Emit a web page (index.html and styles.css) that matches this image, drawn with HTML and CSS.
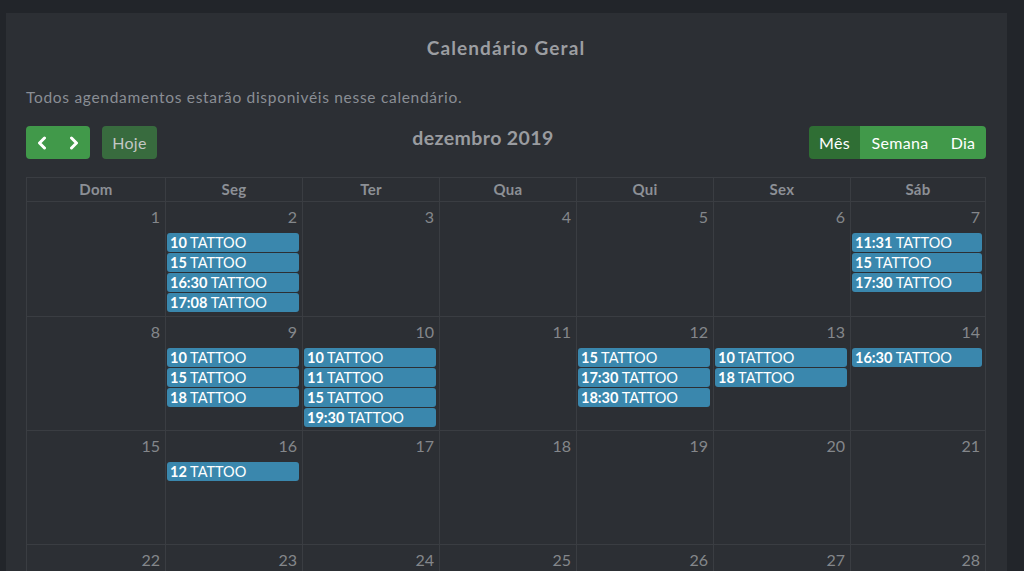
FILE: index.html
```html
<!DOCTYPE html>
<html lang="pt-BR">
<head>
<meta charset="utf-8">
<title>Calendário Geral</title>
<link rel="stylesheet" href="styles.css">
</head>
<body>
<div class="card">
  <h2 class="title">Calendário Geral</h2>
  <p class="subtitle">Todos agendamentos estarão disponivéis nesse calendário.</p>
  <div class="toolbar">
    <div class="left">
      <div class="btn-group">
        <button class="btn nav" aria-label="anterior"><svg width="12" height="14" viewBox="0 0 12 14"><path d="M8.5 2 L3.5 7 L8.5 12" fill="none" stroke="#fff" stroke-width="3" stroke-linecap="round" stroke-linejoin="round"/></svg></button>
        <button class="btn nav" aria-label="próximo"><svg width="12" height="14" viewBox="0 0 12 14"><path d="M3.5 2 L8.5 7 L3.5 12" fill="none" stroke="#fff" stroke-width="3" stroke-linecap="round" stroke-linejoin="round"/></svg></button>
      </div>
      <button class="btn today">Hoje</button>
    </div>
    <h3 class="month">dezembro 2019</h3>
    <div class="right">
      <div class="btn-group">
        <button class="btn view active">Mês</button>
        <button class="btn view">Semana</button>
        <button class="btn view">Dia</button>
      </div>
    </div>
  </div>
  <div class="cal">
    <div class="head">
      <div class="hcell">Dom</div><div class="hcell">Seg</div><div class="hcell">Ter</div><div class="hcell">Qua</div><div class="hcell">Qui</div><div class="hcell">Sex</div><div class="hcell">Sáb</div>
    </div>
    <div class="week">
      <div class="day"><div class="num">1</div></div>
      <div class="day"><div class="num">2</div>
        <div class="ev"><b>10</b> TATTOO</div>
        <div class="ev"><b>15</b> TATTOO</div>
        <div class="ev"><b>16:30</b> TATTOO</div>
        <div class="ev"><b>17:08</b> TATTOO</div>
      </div>
      <div class="day"><div class="num">3</div></div>
      <div class="day"><div class="num">4</div></div>
      <div class="day"><div class="num">5</div></div>
      <div class="day"><div class="num">6</div></div>
      <div class="day"><div class="num">7</div>
        <div class="ev"><b>11:31</b> TATTOO</div>
        <div class="ev"><b>15</b> TATTOO</div>
        <div class="ev"><b>17:30</b> TATTOO</div>
      </div>
    </div>
    <div class="week">
      <div class="day"><div class="num">8</div></div>
      <div class="day"><div class="num">9</div>
        <div class="ev"><b>10</b> TATTOO</div>
        <div class="ev"><b>15</b> TATTOO</div>
        <div class="ev"><b>18</b> TATTOO</div>
      </div>
      <div class="day"><div class="num">10</div>
        <div class="ev"><b>10</b> TATTOO</div>
        <div class="ev"><b>11</b> TATTOO</div>
        <div class="ev"><b>15</b> TATTOO</div>
        <div class="ev"><b>19:30</b> TATTOO</div>
      </div>
      <div class="day"><div class="num">11</div></div>
      <div class="day"><div class="num">12</div>
        <div class="ev"><b>15</b> TATTOO</div>
        <div class="ev"><b>17:30</b> TATTOO</div>
        <div class="ev"><b>18:30</b> TATTOO</div>
      </div>
      <div class="day"><div class="num">13</div>
        <div class="ev"><b>10</b> TATTOO</div>
        <div class="ev"><b>18</b> TATTOO</div>
      </div>
      <div class="day"><div class="num">14</div>
        <div class="ev"><b>16:30</b> TATTOO</div>
      </div>
    </div>
    <div class="week">
      <div class="day"><div class="num">15</div></div>
      <div class="day"><div class="num">16</div>
        <div class="ev"><b>12</b> TATTOO</div>
      </div>
      <div class="day"><div class="num">17</div></div>
      <div class="day"><div class="num">18</div></div>
      <div class="day"><div class="num">19</div></div>
      <div class="day"><div class="num">20</div></div>
      <div class="day"><div class="num">21</div></div>
    </div>
    <div class="week">
      <div class="day"><div class="num">22</div></div>
      <div class="day"><div class="num">23</div></div>
      <div class="day"><div class="num">24</div></div>
      <div class="day"><div class="num">25</div></div>
      <div class="day"><div class="num">26</div></div>
      <div class="day"><div class="num">27</div></div>
      <div class="day"><div class="num">28</div></div>
    </div>
  </div>
</div>
</body>
</html>
```
FILE: styles.css
```css
html, body {
  margin: 0;
  padding: 0;
  height: 100%;
  overflow: hidden;
}
body {
  background: #22252a;
  font-family: "Lato", "Noto Sans", sans-serif;
  color: #8c9096;
  padding: 13px 17px 0 6px;
  box-sizing: border-box;
}
.card {
  background: #2c2f34;
  padding: 23px 21px 40px 20px;
  min-height: 700px;
}
.title {
  margin: 0;
  text-align: center;
  font-size: 19px;
  line-height: 24px;
  font-weight: 700;
  color: #9c9ea2;
  letter-spacing: 1.1px;
}
.subtitle {
  margin: 27px 0 0;
  font-size: 15.5px;
  line-height: 20px;
  color: #8a8e95;
  letter-spacing: 0.7px;
}
.toolbar {
  margin-top: 19px;
  display: flex;
  align-items: center;
  height: 33px;
}
.left {
  display: flex;
  gap: 12px;
}
.right {
  display: flex;
  justify-content: flex-end;
}
.btn-group {
  display: flex;
  border-radius: 4px;
  overflow: hidden;
}
.btn {
  border: 0;
  margin: 0;
  height: 33px;
  font-family: inherit;
  font-size: 16px;
  letter-spacing: 0.3px;
  color: #fff;
  background: #41994a;
  padding: 0;
  display: flex;
  align-items: center;
  justify-content: center;
}
.nav {
  width: 32px;
}
.today {
  width: 55px;
  border-radius: 4px;
  background: #386b3e;
  color: #c3c7c4;
}
.view.active {
  background: #2f6e34;
}
.view:nth-child(1) { width: 51px; }
.view:nth-child(2) { width: 80px; }
.view:nth-child(3) { width: 46px; }
.month {
  flex: 1;
  text-align: center;
  margin: 0 0 10px;
  font-size: 19.5px;
  font-weight: 700;
  color: #9a9ca0;
  line-height: 24px;
  letter-spacing: 0.4px;
}
.cal {
  margin-top: 18px;
  border-top: 1px solid #3a3d42;
  border-left: 1px solid #3a3d42;
}
.head, .week {
  display: grid;
  grid-template-columns: 139px repeat(5, 137px) 1fr;
}
.hcell {
  border-right: 1px solid #3a3d42;
  border-bottom: 1px solid #3a3d42;
  text-align: center;
  font-weight: 700;
  font-size: 15px;
  line-height: 23px;
  color: #8c9096;
  letter-spacing: 0.3px;
}
.day {
  border-right: 1px solid #3a3d42;
  border-bottom: 1px solid #3a3d42;
  height: 114px;
}
.week + .week .day {
  height: 113px;
}
.num {
  text-align: right;
  padding-right: 5px;
  font-size: 16px;
  line-height: 30px;
  color: #84878b;
}
.ev {
  margin: 1px 3px 0 1px;
  background: #3a87ad;
  border-radius: 3px;
  color: #fff;
  font-size: 14.5px;
  line-height: 19px;
  padding: 0 3px;
  white-space: nowrap;
  overflow: hidden;
}
.ev b { font-weight: 700; }
```
